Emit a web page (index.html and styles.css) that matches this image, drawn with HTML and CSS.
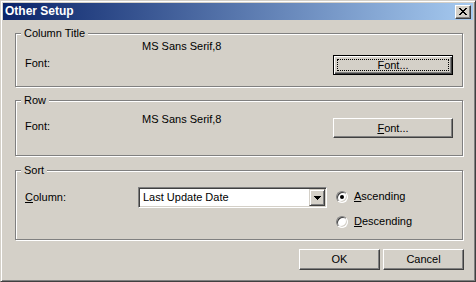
FILE: index.html
```html
<!DOCTYPE html>
<html lang="en">
<head>
  <meta charset="UTF-8">
  <title>Other Setup</title>
  <link rel="stylesheet" href="styles.css">
</head>
<body>

<div class="window">
  <div class="titlebar">
    <span class="title">Other Setup</span>
    <span class="close">
      <svg width="8" height="7" viewBox="0 0 8 7" shape-rendering="crispEdges">
        <path d="M0 0h2v1H0z M6 0h2v1H6z M1 1h2v1H1z M5 1h2v1H5z M2 2h4v1H2z M3 3h2v1H3z M2 4h4v1H2z M1 5h2v1H1z M5 5h2v1H5z M0 6h2v1H0z M6 6h2v1H6z" fill="#000"/>
      </svg>
    </span>
  </div>

  <div class="client">
    <!-- Titulo de columna -->
    <fieldset class="group group-col">
      <legend>Column Title</legend>
      <div class="line">
        <span class="lbl">Font:</span>
        <span class="val">MS Sans Serif,8</span>
        <button class="btn btn-font btn-default"><span>Font...</span></button>
      </div>
    </fieldset>

    <!-- Fila -->
    <fieldset class="group group-row">
      <legend>Row</legend>
      <div class="line">
        <span class="lbl">Font:</span>
        <span class="val">MS Sans Serif,8</span>
        <button class="btn btn-font"><span><u>F</u>ont...</span></button>
      </div>
    </fieldset>

    <!-- Orden -->
    <fieldset class="group group-sort">
      <legend>Sort</legend>
      <div class="sort-line">
        <span class="lbl"><u>C</u>olumn:</span>
        <div class="combo">
          <span class="combo-text">Last Update Date</span>
          <span class="combo-btn">
            <svg width="7" height="4" viewBox="0 0 7 4" shape-rendering="crispEdges">
              <path d="M0 0h7v1H0z M1 1h5v1H1z M2 2h3v1H2z M3 3h1v1H3z" fill="#000"/>
            </svg>
          </span>
        </div>
        <div class="radios">
          <div class="opt"><span class="radio checked"></span><span><u>A</u>scending</span></div>
          <div class="opt"><span class="radio"></span><span><u>D</u>escending</span></div>
        </div>
      </div>
    </fieldset>

    <div class="actions">
      <button class="btn btn-action">OK</button>
      <button class="btn btn-action">Cancel</button>
    </div>
  </div>
</div>

</body>
</html>
```

FILE: styles.css
```css
/* Dialogo estilo Windows 2000 */
body {
  margin: 0;
  font-family: "Liberation Sans", Arial, sans-serif;
  font-size: 11px;
  line-height: 13px;
  color: #000;
}
.window {
  width: 476px;
  height: 282px;
  box-sizing: border-box;
  background: #d4d0c8;
  border: 1px solid;
  border-color: #d4d0c8 #404040 #404040 #d4d0c8;
  box-shadow: inset 1px 1px #fff, inset -1px -1px #808080;
  padding: 2px;
}
.titlebar {
  height: 17px;
  display: flex;
  align-items: center;
  justify-content: space-between;
  padding: 0 2px 0 2px;
  background: linear-gradient(to right, #0a246a, #a6caf0);
}
.title {
  color: #fff;
  font-weight: bold;
  font-size: 12px;
}
.close {
  width: 16px;
  height: 14px;
  box-sizing: border-box;
  display: flex;
  align-items: center;
  justify-content: center;
  background: #d4d0c8;
  border: 1px solid;
  border-color: #fff #404040 #404040 #fff;
  box-shadow: inset -1px -1px #808080;
}
.client {
  padding: 7px 10px 0 12px;
}
.group {
  margin: 0;
  padding: 0;
  border: 1px solid #808080;
  box-shadow: inset 1px 1px #fff, 1px 1px #fff;
  min-width: 0;
}
.group legend {
  margin-left: 5px;
  padding: 0 3px;
  background: #d4d0c8;
}
.group-col {
  padding-bottom: 11px;
  margin-bottom: 7px;
}
.group-row {
  padding-bottom: 17px;
  margin-bottom: 8px;
}
.group-sort {
  padding-bottom: 11px;
  margin-bottom: 9px;
}
.line {
  display: grid;
  grid-template-columns: 117px 191px 120px;
  align-items: start;
  padding-left: 9px;
}
.group-col .val { margin-top: 0; }
.group-col .lbl { margin-top: 17px; }
.group-col .btn { margin-top: 15px; }
.group-row .val { margin-top: 6px; }
.group-row .lbl { margin-top: 13px; }
.group-row .btn { margin-top: 11px; }

.btn {
  font: inherit;
  color: #000;
  background: #d4d0c8;
  border: 1px solid;
  border-color: #fff #404040 #404040 #fff;
  box-shadow: inset -1px -1px #808080;
  padding: 0;
  margin: 0;
}
.btn-font {
  width: 120px;
  height: 20px;
}
.btn-default {
  border-color: #000;
  box-shadow: inset 1px 1px #fff, inset -1px -1px #404040, inset -2px -2px #808080;
  outline: 1px dotted #000;
  outline-offset: -5px;
}
.sort-line {
  display: grid;
  grid-template-columns: 113px 189px auto;
  align-items: start;
  padding-left: 9px;
}
.sort-line .lbl { margin-top: 14px; }
.combo {
  margin-top: 10px;
  height: 21px;
  box-sizing: border-box;
  display: flex;
  align-items: center;
  justify-content: space-between;
  background: #fff;
  border: 1px solid;
  border-color: #808080 #fff #fff #808080;
  box-shadow: inset 1px 1px #404040, inset -1px -1px #d4d0c8;
  padding: 1px;
}
.combo-text {
  padding-left: 3px;
}
.combo-btn {
  width: 16px;
  height: 17px;
  box-sizing: border-box;
  display: flex;
  align-items: center;
  justify-content: center;
  background: #d4d0c8;
  border: 1px solid;
  border-color: #d4d0c8 #404040 #404040 #d4d0c8;
  box-shadow: inset 1px 1px #fff, inset -1px -1px #808080;
}
.radios {
  margin-top: 13px;
  margin-left: 9px;
  display: flex;
  flex-direction: column;
  gap: 12px;
}
.opt {
  display: flex;
  align-items: center;
  gap: 6px;
  height: 13px;
}
.radio {
  width: 12px;
  height: 12px;
  box-sizing: border-box;
  border-radius: 50%;
  background: #fff;
  border: 1px solid;
  border-color: #808080 #fff #fff #808080;
  box-shadow: inset 1px 1px #404040, inset -1px -1px #d4d0c8;
  display: flex;
  align-items: center;
  justify-content: center;
}
.radio.checked::after {
  content: "";
  width: 4px;
  height: 4px;
  border-radius: 50%;
  background: #000;
}
.actions {
  display: flex;
  justify-content: flex-end;
  gap: 3px;
  margin-right: -1px;
}
.btn-action {
  width: 81px;
  height: 21px;
}
```
